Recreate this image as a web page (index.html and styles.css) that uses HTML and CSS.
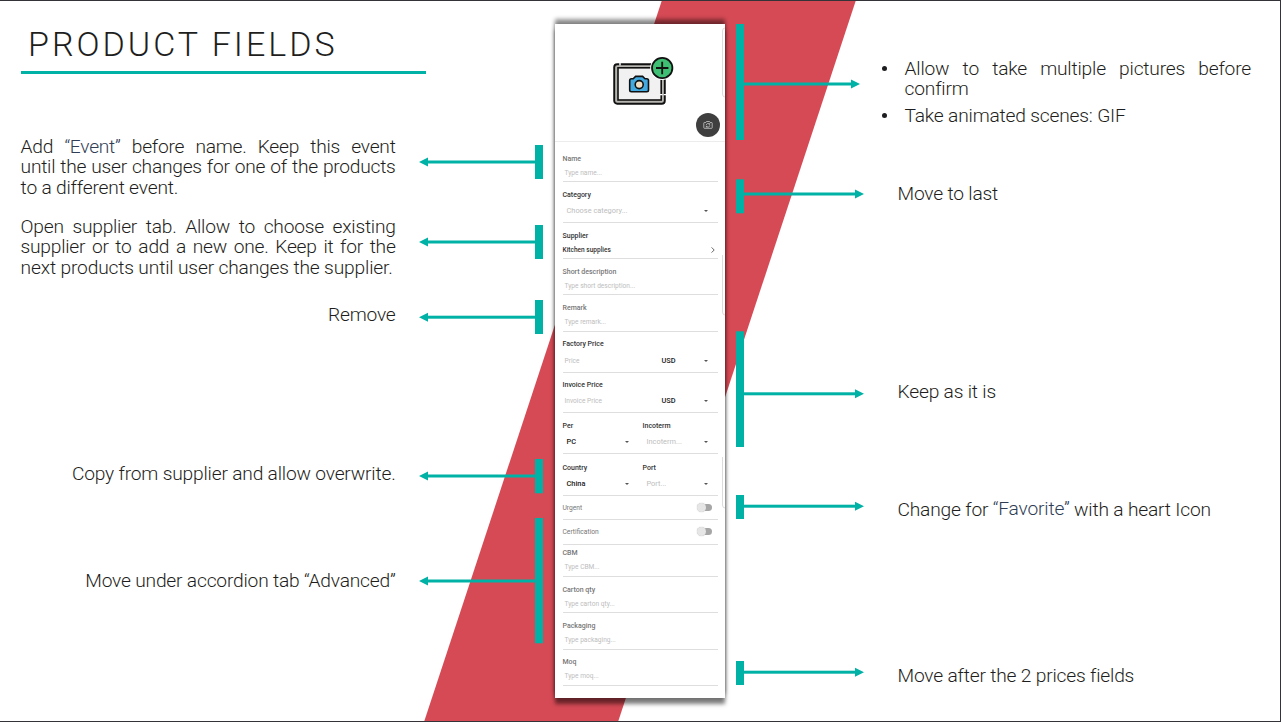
FILE: index.html
```html
<!DOCTYPE html>
<html lang="en">
<head>
<meta charset="utf-8">
<title>Product Fields</title>
<link rel="stylesheet" href="styles.css">
</head>
<body>
<main class="slide">
  <svg class="art" viewBox="0 0 1281 722" aria-hidden="true">
    <polygon class="band" points="662,0 856,0 618,722 424,722"/>
  </svg>

  <section class="left">
    <h1 class="title">PRODUCT FIELDS</h1>
    <p class="note n-event"><span class="fill">Add <span class="tint">“Event”</span> before name. Keep this event</span><span class="fill">until the user changes for one of the products</span><span class="line">to a different event.</span></p>
    <p class="note n-supplier"><span class="fill">Open supplier tab. Allow to choose existing</span><span class="fill">supplier or to add a new one. Keep it for the</span><span class="line last">next products until user changes the supplier.</span></p>
    <p class="note end n-remove">Remove</p>
    <p class="note end n-copy">Copy from supplier and allow overwrite.</p>
    <p class="note end n-advanced">Move under accordion tab “Advanced”</p>
  </section>

  <section class="phone">
    <div class="photo">
      <svg class="picture" viewBox="0 0 64 52">
        <rect x="2.2" y="8.2" width="50.6" height="39.6" rx="3" fill="#b7b5b0" stroke="#111" stroke-width="1.9"/>
        <rect x="6" y="11.8" width="43.2" height="32.2" fill="#f1f1f1" stroke="#111" stroke-width="1.6"/>
        <path d="M8 7v2.4M51.6 38.6h2.5M48 38.6h2.5" stroke="#fff" stroke-width="1.4"/>
        <path d="M17.7 24.5q0-1.7 1.7-1.7h1.8l2.4-2.4h7l2.4 2.4h1.8q1.7 0 1.7 1.7v9.6q0 1.7-1.7 1.7H19.4q-1.7 0-1.7-1.7z" fill="#43aae0" stroke="#111" stroke-width="1.6"/>
        <circle cx="27.2" cy="28.6" r="4" fill="#f1dfc4" stroke="#111" stroke-width="1.6"/>
        <circle cx="50.2" cy="12" r="12" fill="#fff"/>
        <circle cx="50.2" cy="12" r="10.2" fill="#3fbf73" stroke="#111" stroke-width="1.8"/>
        <path d="M44 12h12.4M50.2 5.8v12.4" stroke="#111" stroke-width="1.8"/>
      </svg>
      <div class="shutter">
        <svg viewBox="0 0 10 8" fill="none" stroke="#ddd" stroke-width=".7">
          <path d="M.8 2.1q0-.6.6-.6h1.4l.7-1h3l.7 1h1.4q.6 0 .6.6v4.6q0 .6-.6.6H1.4q-.6 0-.6-.6z"/>
          <path d="M3.2 4.2a1.9 1.9 0 0 1 3.3-1.1M6.8 4.4a1.9 1.9 0 0 1-3.3 1.1M6.7 2.2v1.1H5.6M3.3 6.5V5.4h1.1"/>
        </svg>
      </div>
    </div>
    <form class="form">
      <div class="field f-name soft"><b>Name</b><i>Type name...</i></div>
      <div class="field f-select"><b>Category</b><div class="row"><i>Choose category...</i><u class="caret"></u></div></div>
      <div class="field f-supplier"><b>Supplier</b><div class="row link"><b>Kitchen supplies</b><svg class="chevron" viewBox="0 0 4 6"><path d="M.6.4 3.2 3 .6 5.6" fill="none" stroke="#555" stroke-width=".9"/></svg></div></div>
      <div class="field f-text soft"><b>Short description</b><i>Type short description...</i></div>
      <div class="field f-text soft"><b>Remark</b><i>Type remark...</i></div>
      <div class="field f-select f-price"><b>Factory Price</b><div class="row"><i class="small">Price</i><em>USD</em><u class="caret"></u></div></div>
      <div class="field f-select f-price"><b>Invoice Price</b><div class="row"><i class="small">Invoice Price</i><em>USD</em><u class="caret"></u></div></div>
      <div class="field f-select f-pair">
        <div class="half"><b>Per</b><div class="row"><em>PC</em><u class="caret"></u></div></div>
        <div class="half"><b>Incoterm</b><div class="row"><i>Incoterm...</i><u class="caret"></u></div></div>
      </div>
      <div class="field f-select f-pair f-country">
        <div class="half"><b>Country</b><div class="row"><em>China</em><u class="caret"></u></div></div>
        <div class="half"><b>Port</b><div class="row"><i>Port...</i><u class="caret"></u></div></div>
      </div>
      <div class="field f-switch soft"><b>Urgent</b><span class="switch"></span></div>
      <div class="field f-switch soft"><b>Certification</b><span class="switch"></span></div>
      <div class="field f-cbm soft"><b>CBM</b><i>Type CBM...</i></div>
      <div class="field f-text soft"><b>Carton qty</b><i>Type carton qty...</i></div>
      <div class="field f-text soft"><b>Packaging</b><i>Type packaging...</i></div>
      <div class="field f-text soft"><b>Moq</b><i>Type moq...</i></div>
    </form>
    <svg class="edges" viewBox="0 0 4 674" fill="none" stroke="#dcdcdc">
      <path d="M4 4Q1.5 4 1.5 7v63q0 3 2.5 3M1.5 231v57q0 3 2.5 3M1.5 433v48q0 3 2.5 3"/>
    </svg>
  </section>

  <section class="right">
    <ul class="list">
      <li><span class="fill">Allow to take multiple pictures before</span><span class="line">confirm</span></li>
      <li>Take animated scenes: GIF</li>
    </ul>
    <p class="note n-last">Move to last</p>
    <p class="note n-keep">Keep as it is</p>
    <p class="note n-favorite">Change for <span class="tint raised">“Favorite”</span> with a heart Icon</p>
    <p class="note n-after">Move after the 2 prices fields</p>
  </section>

  <svg class="art" viewBox="0 0 1281 722" aria-hidden="true">
    <defs>
      <g id="to-left"><rect x="8" y="-1.5" width="112" height="3"/><path d="M0 0 9-4.5v9z"/></g>
      <g id="to-right"><rect x="-122" y="-1.5" width="114" height="3"/><path d="M0 0-9-4.5v9z"/></g>
    </defs>
    <g class="connectors">
      <rect x="535" y="145" width="8" height="34"/><use href="#to-left" x="419" y="162"/>
      <rect x="535" y="225" width="8" height="34"/><use href="#to-left" x="419" y="242"/>
      <rect x="535" y="300" width="8" height="34"/><use href="#to-left" x="419" y="317.2"/>
      <rect x="535" y="459" width="8" height="34.3"/><use href="#to-left" x="419" y="476"/>
      <rect x="535" y="518" width="8" height="125.3"/><use href="#to-left" x="419" y="581"/>
      <rect x="736" y="24" width="8" height="116"/><use href="#to-right" x="860" y="84"/>
      <rect x="736" y="179.3" width="8" height="34"/><use href="#to-right" x="864" y="194"/>
      <rect x="736" y="331.3" width="8" height="115.7"/><use href="#to-right" x="864" y="393.8"/>
      <rect x="736" y="495" width="8" height="24"/><use href="#to-right" x="864" y="506.2"/>
      <rect x="736" y="661" width="8" height="24"/><use href="#to-right" x="864" y="672.2"/>
    </g>
  </svg>
</main>
</body>
</html>
```
FILE: styles.css
```css
* { box-sizing: border-box; }
body { margin: 0; background: #fff; font-family: Roboto, "Liberation Sans", sans-serif; }
h1, p, ul { margin: 0; padding: 0; font-weight: 300; }

.slide {
  position: relative;
  width: 1281px;
  height: 722px;
  overflow: hidden;
  display: grid;
  grid-template-columns: 555px 170px 1fr;
  border: solid #343338;
  border-width: 1px 1px 1px 0;
  color: #1e1e20;
}
.art { position: absolute; left: 0; top: -1px; width: 1281px; height: 722px; pointer-events: none; }
.band { fill: #d64a55; }
.connectors { fill: #00b1a5; }
.left, .phone, .right { position: relative; }

/* notes */
.left, .right { display: grid; align-content: start; }
.left { padding-left: 20.6px; grid-template-rows: 136px 80px 87.5px 159px 107px 40px; }
.right { padding-left: 172.5px; grid-template-rows: 183px 198px 118px 166px 40px; }
.title {
  width: 405px;
  height: 73px;
  padding: 22.5px 0 0 7.4px;
  border-bottom: 3px solid #00b1a5;
  font-size: 34px;
  line-height: 40px;
  letter-spacing: 3px;
  white-space: nowrap;
}
.note { width: 375px; font-size: 19.2px; letter-spacing: -.19px; line-height: 20.4px; white-space: nowrap; }
.end { text-align: right; }
.fill, .line { display: block; }
.fill { text-align: justify; text-align-last: justify; white-space: normal; }
.n-event .fill, .n-supplier .fill { letter-spacing: -.25px; }
.n-supplier .last { letter-spacing: -.16px; }
.tint { color: #2f3d55; }
.raised { position: relative; top: -1px; }
.list { list-style: none; padding-top: 57.5px; width: 353.5px; font-size: 19.2px; letter-spacing: -.19px; line-height: 20.5px; }
.list li { position: relative; padding-left: 7px; margin-bottom: 6px; }
.list li::before { content: ""; position: absolute; left: -16px; top: 7.5px; width: 5px; height: 5px; border-radius: 50%; background: #1e1e20; }

/* phone mockup */
.phone {
  margin-top: 23px;
  height: 674px;
  background: #fff;
  box-shadow: 0 6px 4px 0 rgba(0,0,0,.5), 0 -5px 4px 0 rgba(0,0,0,.42), 0 0 4px rgba(0,0,0,.25);
}
.photo { height: 118px; padding: 32px 0 0 57px; border-bottom: 1.5px solid #ececec; }
.picture { display: block; width: 64px; height: 52px; }
.shutter {
  width: 24px; height: 24px;
  margin: 4.5px 0 0 83.5px;
  display: grid; place-items: center;
  border-radius: 50%;
  background: #3f3f3f;
}
.shutter svg { width: 10px; height: 8px; }
.edges { position: absolute; right: 0; top: 0; width: 4px; height: 674px; }

.form { padding: 0 7.5px; font-size: 7px; line-height: 10px; color: #333; }
.form b { font-weight: 500; }
.form i, .form em { font-style: normal; }
.form i { color: #bdbdbd; }
.field {
  display: flex;
  flex-direction: column;
  justify-content: flex-end;
  height: 36.3px;
  padding-bottom: 3.6px;
  border-bottom: 1px solid #dedede;
}
.form .soft b { color: #777; font-weight: 500; }
.field > i { margin-top: 4px; padding-left: 2px; font-size: 6.6px; }
.f-name { height: 40.4px; }
.f-select { height: 40.8px; padding-bottom: 5.9px; }
.f-supplier { height: 36px; }
.f-country { height: 42px; }
.f-cbm { height: 32.4px; }
.row { display: flex; align-items: center; height: 10px; margin-top: 6.3px; padding: 0 9.5px 0 4px; font-size: 7.4px; }
.row.link { margin-top: 4px; padding: 0 3px 0 0; font-size: 6.55px; }
.row em { color: #222; font-weight: 500; }
.caret { margin-left: auto; border: solid transparent; border-width: 2.9px 2.9px 0; border-top-color: #555; }
.chevron { margin-left: auto; width: 4px; height: 6px; }
.row .small { width: 97px; margin-left: -2px; font-size: 6.6px; }
.f-pair { flex-direction: row; justify-content: flex-start; align-items: flex-end; }
.half { width: 80px; }
.half + .half { width: 75px; }
.half:first-child .row { padding-right: 13.8px; }
.half + .half .row { padding-right: 9.3px; }
.f-switch { height: 24.2px; flex-direction: row; justify-content: space-between; align-items: center; padding: 0 6px 0 0; font-size: 6.7px; }
.form .f-switch b { font-weight: 400; }
.switch { position: relative; width: 14px; height: 7px; border-radius: 3.5px; background: #a6a6a6; }
.switch::before { content: ""; position: absolute; left: -1px; top: -1px; width: 9px; height: 9px; border-radius: 50%; background: #e6e6e6; box-shadow: 0 0 1px #aaa; }
```
